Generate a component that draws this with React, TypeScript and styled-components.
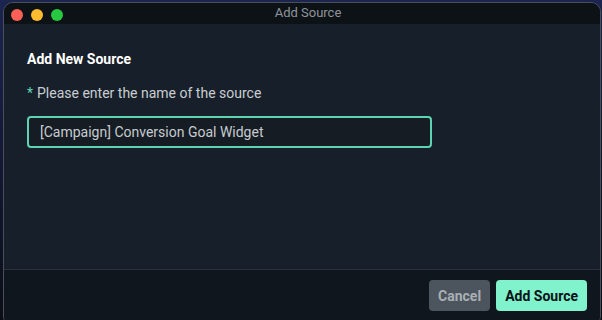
import styled, { createGlobalStyle } from "styled-components";

const GlobalStyle = createGlobalStyle`
  html, body {
    margin: 0;
    padding: 0;
    width: 602px;
    height: 320px;
    overflow: hidden;
    background: #0b0e16;
    font-family: Roboto, "Liberation Sans", sans-serif;
  }
  * {
    box-sizing: border-box;
  }
`;

const Desktop = styled.div`
  padding: 2px 1px 0 3px;
  height: 320px;
  background: linear-gradient(180deg, #1c2550 0%, #151a3a 40%, #0b0e16 100%);
`;

const Window = styled.div`
  height: 324px;
  display: flex;
  flex-direction: column;
  border-radius: 10px;
  border: 1px solid #4a5058;
  overflow: hidden;
  background: #17202a;
`;

const TitleBar = styled.div`
  position: relative;
  height: 21px;
  flex-shrink: 0;
  display: flex;
  align-items: center;
  justify-content: center;
  background: #0d1217;
`;

const Lights = styled.div`
  position: absolute;
  left: 7px;
  top: 6px;
  display: flex;
  gap: 8px;
`;

const Light = styled.span<{ color: string }>`
  width: 12px;
  height: 12px;
  border-radius: 50%;
  background: ${(p) => p.color};
`;

const WindowTitle = styled.div`
  color: #8e949a;
  font-size: 13px;
  line-height: 16px;
  padding: 0 0 2px 12px;
`;

const Body = styled.div`
  flex: 1;
  padding: 26px 23px 0;
  display: flex;
  flex-direction: column;
`;

const Heading = styled.h2`
  margin: 0;
  color: #ffffff;
  font-size: 14px;
  font-weight: 700;
  line-height: 18px;
`;

const Label = styled.div`
  margin-top: 16px;
  color: #c9cdd1;
  font-size: 14px;
  line-height: 18px;
`;

const Required = styled.span`
  color: #5ed3b2;
  margin-right: 4px;
`;

const Input = styled.input`
  margin-top: 14px;
  width: 405px;
  height: 32px;
  padding: 0 11px;
  border: 2px solid #5ed3b2;
  border-radius: 4px;
  background: #151c23;
  color: #c7cbd0;
  font-family: Roboto, "Liberation Sans", sans-serif;
  font-size: 14px;
  outline: none;
`;

const Footer = styled.div`
  height: 52px;
  flex-shrink: 0;
  margin-bottom: 4px;
  border-top: 1px solid #2a333c;
  background: #0f161d;
  display: flex;
  justify-content: flex-end;
  align-items: flex-start;
  gap: 6px;
  padding: 10px 13px 0 0;
`;

const Button = styled.button<{ primary?: boolean }>`
  height: 31px;
  padding: 0 9px;
  border: none;
  border-radius: 4px;
  font-family: Roboto, "Liberation Sans", sans-serif;
  font-size: 14px;
  font-weight: 700;
  background: ${(p) => (p.primary ? "#80f2cc" : "#4c555e")};
  color: ${(p) => (p.primary ? "#0b1116" : "#a9afb4")};
`;

export default function App() {
  return (
    <>
      <GlobalStyle />
      <Desktop>
        <Window>
          <TitleBar>
            <Lights>
              <Light color="#fe5f57" />
              <Light color="#febc2e" />
              <Light color="#28c840" />
            </Lights>
            <WindowTitle>Add Source</WindowTitle>
          </TitleBar>
          <Body>
            <Heading>Add New Source</Heading>
            <Label>
              <Required>*</Required>Please enter the name of the source
            </Label>
            <Input defaultValue="[Campaign] Conversion Goal Widget" />
          </Body>
          <Footer>
            <Button>Cancel</Button>
            <Button primary>Add Source</Button>
          </Footer>
        </Window>
      </Desktop>
    </>
  );
}
